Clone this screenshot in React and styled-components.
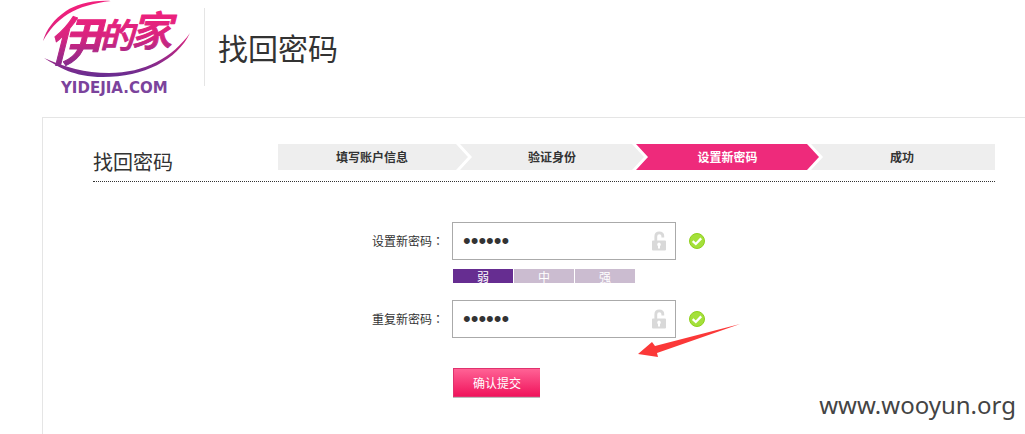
import React from "react";
import styled, { createGlobalStyle, css } from "styled-components";

const GlobalStyle = createGlobalStyle`
  * { box-sizing: border-box; }
  body {
    margin: 0;
    background: #fff;
    color: #333;
    font: 12px/18px "Noto Sans CJK SC", sans-serif;
  }
`;

const Page = styled.div`
  position: relative;
  display: flex;
  flex-direction: column;
  min-height: 100vh;
  padding-left: 42px;
  overflow: hidden;
`;

const Header = styled.header`
  display: flex;
  align-items: flex-start;
  height: 117px;
`;

const LogoLink = styled.a`
  display: block;
  width: 150px;
  height: 100px;
  margin-right: 12px;
`;

const HeaderTitle = styled.h1`
  margin: 8px 0 0;
  padding-left: 13px;
  border-left: 1px solid #e5e5e5;
  font-size: 30px;
  font-weight: 400;
  line-height: 78px;
`;

const Panel = styled.main`
  flex: 1;
  padding: 26px 30px 30px 50px;
  border: solid #e5e5e5;
  border-width: 1px 0 0 1px;
`;

const PanelHead = styled.div`
  display: flex;
  border-bottom: 1px dotted #333;
`;

const PanelTitle = styled.h2`
  flex: none;
  width: 185px;
  margin: 0;
  font-size: 20px;
  font-weight: 400;
  line-height: 36px;
`;

const Steps = styled.ol`
  flex: 1;
  display: grid;
  grid-template-columns: 194fr 176fr 175fr 172fr;
  height: 26px;
  margin: 0 0 11px;
  padding: 0;
  list-style: none;
`;

const Step = styled.li`
  display: flex;
  background: ${(p) => (p.$active ? "#ee2a7b" : "#eee")};
  color: ${(p) => (p.$active ? "#fff" : "#333")};
  font-weight: 700;
  line-height: 26px;
  &:first-child { padding-left: 10px; }
  &:last-child { padding-right: 14px; }
`;

const StepLabel = styled.span`
  flex: 1;
  text-align: center;
`;

const Form = styled.form`
  padding-top: 40px;
`;

const Row = styled.div`
  display: flex;
  align-items: center;
`;

const Label = styled.label`
  width: 351px;
  margin-right: 8px;
  text-align: right;
`;

const Colon = styled.span`
  font-family: "Noto Sans CJK TC", sans-serif;
`;

const Field = styled.div`
  display: flex;
  align-items: center;
  width: 224px;
  height: 38px;
  margin-right: 13px;
  padding: 0 9px 0 10px;
  border: 1px solid #aaa;
`;

const PasswordInput = styled.input`
  flex: 1;
  min-width: 0;
  height: 36px;
  padding: 0;
  border: 0;
  outline: 0;
  background: transparent;
  color: #333;
  font: 22px "Liberation Sans", sans-serif;
`;

const indent = css`
  margin-left: 360px;
`;

const Strength = styled.ul`
  ${indent}
  display: flex;
  gap: 1px;
  margin-top: 9px;
  margin-bottom: 17px;
  padding: 0;
  list-style: none;
`;

const Level = styled.li`
  width: 60px;
  height: 14px;
  background: ${(p) => (p.$on ? "#662d91" : "#cbbcd0")};
  color: #fff;
  line-height: 16px;
  text-align: center;
`;

const Submit = styled.button`
  ${indent}
  display: block;
  width: 87px;
  height: 29px;
  margin-top: 30px;
  padding: 0;
  border: 1px solid #e0326e;
  border-right-width: 0;
  background: linear-gradient(#ff6295, #f0145c);
  box-shadow: 0 1px 0 #bbb;
  color: #fff;
  font: 12px/27px "Noto Sans CJK SC", sans-serif;
`;

const Pointer = styled.svg`
  position: absolute;
  left: 638px;
  top: 323px;
`;

const Watermark = styled.div`
  position: absolute;
  right: 9px;
  bottom: 12px;
  color: #444;
  font: 24px/34px "Noto Sans", sans-serif;
`;

const Logo = () => (
  <svg width="150" height="100" viewBox="42 0 150 100" role="img" aria-label="伊的家">
    <defs>
      <linearGradient id="brand" gradientUnits="userSpaceOnUse" x1="0" y1="10" x2="0" y2="77">
        <stop offset="0" stopColor="#f0207c" />
        <stop offset="0.4" stopColor="#d8247f" />
        <stop offset="1" stopColor="#652d91" />
      </linearGradient>
    </defs>
    <g fill="url(#brand)">
      <path d="M111 1C90 0 76 5 66 11C54 19 46 30 43 41C49 30 57 21 68 14C80 7 93 3 111 1Z" />
      <path d="M44 58C59 67 73 77 103 77C144 77 177 60 190 33C173 57 145 73 109 73C85 73 65 67 44 58Z" />
      <g fontFamily="Noto Sans CJK SC, sans-serif" fontWeight="500" fontStyle="italic" stroke="url(#brand)" strokeLinejoin="round">
        <text x="48" y="61" fontSize="53" strokeWidth="1">伊</text>
        <text x="100" y="48" fontSize="34" strokeWidth="1">的</text>
        <text x="131" y="46" fontSize="41" strokeWidth="1">家</text>
      </g>
    </g>
    <text x="61" y="93" fill="#7b439c" fontFamily="DejaVu Sans, sans-serif" fontWeight="700" fontSize="15">
      YIDEJIA.COM
    </text>
  </svg>
);

const Chevron = ({ from, to }) => (
  <svg width="16" height="26" viewBox="0 0 16 26" aria-hidden="true">
    <path d="M0 0H16V26H0Z" fill="#fff" />
    <path d="M0 0L12 13L0 26Z" fill={from} />
    <path d="M4 0H16V26H4L16 13Z" fill={to} />
  </svg>
);

const LockIcon = () => (
  <svg width="14" height="20" viewBox="0 0 14 20" aria-hidden="true">
    <path d="M3.8 10V5.5Q3.8 1.8 7.2 1.8Q10.8 1.8 10.8 5V6.5" fill="none" stroke="#d9d9d9" strokeWidth="2.8" />
    <path fillRule="evenodd" fill="#d9d9d9" d="M1 9.5H13Q14 9.5 14 10.5V18.5Q14 19.5 13 19.5H1Q0 19.5 0 18.5V10.5Q0 9.5 1 9.5ZM7 11.5A2 2 0 0 0 6 15.1V17.5H8V15.1A2 2 0 0 0 7 11.5Z" />
  </svg>
);

const CheckIcon = () => (
  <svg width="16" height="16" viewBox="0 0 16 16" role="img" aria-label="OK">
    <circle cx="8" cy="8" r="7.5" fill="#a4e03a" stroke="#8fd01c" />
    <path d="M3.7 8.2L6.8 11L12.2 5.4" fill="none" stroke="#fff" strokeWidth="2.3" />
  </svg>
);

const STEPS = ["填写账户信息", "验证身份", "设置新密码", "成功"];
const ACTIVE = 2;
const fill = (i) => (i === ACTIVE ? "#ee2a7b" : "#eee");

const PasswordRow = ({ id, label }) => (
  <Row>
    <Label htmlFor={id}>{label}<Colon>：</Colon></Label>
    <Field>
      <PasswordInput id={id} type="password" defaultValue="123456" />
      <LockIcon />
    </Field>
    <CheckIcon />
  </Row>
);

export default function App() {
  return (
    <Page>
      <GlobalStyle />
      <Header>
        <LogoLink href="#"><Logo /></LogoLink>
        <HeaderTitle>找回密码</HeaderTitle>
      </Header>
      <Panel>
        <PanelHead>
          <PanelTitle>找回密码</PanelTitle>
          <Steps>
            {STEPS.map((s, i) => (
              <Step key={s} $active={i === ACTIVE}>
                <StepLabel>{s}</StepLabel>
                {i < STEPS.length - 1 && <Chevron from={fill(i)} to={fill(i + 1)} />}
              </Step>
            ))}
          </Steps>
        </PanelHead>
        <Form onSubmit={(e) => e.preventDefault()}>
          <PasswordRow id="password" label="设置新密码" />
          <Strength>
            <Level $on>弱</Level>
            <Level>中</Level>
            <Level>强</Level>
          </Strength>
          <PasswordRow id="repeat" label="重复新密码" />
          <Submit type="submit">确认提交</Submit>
        </Form>
      </Panel>
      <Pointer width="104" height="36" viewBox="0 0 104 36" aria-hidden="true">
        <path d="M0 31L14 19L17 23L102 1L19 30L20 34Z" fill="#fb3838" />
      </Pointer>
      <Watermark>www.wooyun.org</Watermark>
    </Page>
  );
}
